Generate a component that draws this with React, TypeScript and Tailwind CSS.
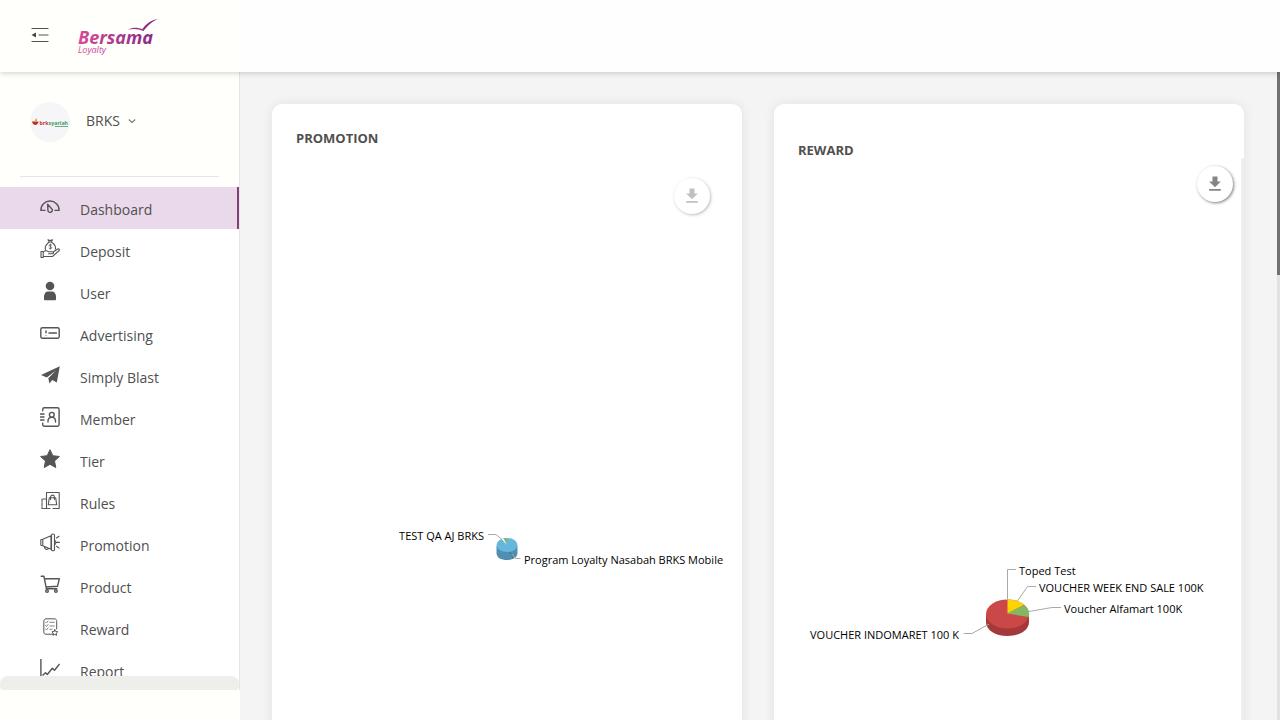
import type { ReactNode } from "react";
import { MdFileDownload } from "react-icons/md";

const line = {
  fill: "none",
  stroke: "#555",
  strokeWidth: 1.4,
  strokeLinecap: "round" as const,
  strokeLinejoin: "round" as const,
};
const thin = { ...line, strokeWidth: 1.1 };

const items: { label: string; icon: ReactNode }[] = [
  {
    label: "Dashboard",
    icon: (
      <g {...line} strokeLinecap="butt">
        <path d="M5.5 13.4H.9C.7 8 5 4 10 4s9.300 4 9.100 9.400h-4.600" />
        <path d="M7.600 7.200 8 14a2.300 2.300 0 0 0 4.400-1c-.2-.8-.8-1.400-1.400-2Z" />
      </g>
    ),
  },
  {
    label: "Deposit",
    icon: (
      <g {...thin}>
        <path d="M1 12.500h2.200v6H1zM3.200 17.500h9.300l6.700-6c.6-1.400-.8-2-2-1.200l-3.700 2.500M3.200 13c2-1.800 3.800-1.600 5.400-.2h3.800c1.500 0 1.500 2 0 2H8.500" />
        <path d="M9.200 3 8 .8l2.200.7L12.500.7l-1.200 2.300ZM9.200 3C6 5.500 4.500 8 5.500 10.800M11.300 3c3 2 4.800 4.600 4 7.200" />
        <path d="M11.700 6c-1-.8-2.700-.3-2.500.8.2 1 2.500.7 2.600 1.900 0 1.100-1.800 1.300-2.800.5M10.400 5v5" strokeWidth=".8" />
      </g>
    ),
  },
  {
    label: "User",
    icon: (
      <g fill="#555">
        <circle cx="10" cy="5" r="4.300" />
        <path d="M4 18.500v-3C4 12.400 6 10.500 8 10.500h4c2 0 4 1.900 4 5v3c0 .5-.3.800-.8.800H4.800c-.5 0-.8-.3-.8-.8Z" />
      </g>
    ),
  },
  {
    label: "Advertising",
    icon: (
      <g {...line}>
        <rect x=".8" y="4.800" width="18.400" height="10.400" rx="1.600" />
        <path d="M9 10h7.500" />
        <path d="M6 7.400v2.800M6 12v.6" strokeWidth="1.500" strokeLinecap="butt" />
      </g>
    ),
  },
  {
    label: "Simply Blast",
    icon: <path fill="#555" d="M19.800 1.200 16.800 17.500l-4.600-2.400-2.700 3.400-1.200-5.300L16 5.600 6.800 12.400 1 9.900Z" />,
  },
  {
    label: "Member",
    icon: (
      <g {...line}>
        <path d="M2.700 3.800V2.500C2.700 1.500 3.400.8 4.400.8h13c1 0 1.700.7 1.700 1.700v15c0 1-.7 1.700-1.700 1.700h-13c-1 0-1.700-.7-1.700-1.700v-1.300" />
        <path d="M.6 7H4M.6 10H4M.6 13H4" />
        <circle cx="11.800" cy="7.800" r="2.400" />
        <path d="M8 15v-1c0-2 1.500-3.600 3.800-3.600s3.700 1.600 3.700 3.600v1" />
      </g>
    ),
  },
  {
    label: "Tier",
    icon: (
      <path
        fill="#555"
        stroke="#555"
        strokeLinejoin="round"
        d="m10 .7 2.800 6 6.600.8-4.900 4.500 1.300 6.600-5.800-3.300-5.800 3.300L5.500 12 .6 7.500l6.600-.8Z"
      />
    ),
  },
  {
    label: "Rules",
    icon: (
      <g {...thin}>
        <path d="M6.500 17V1.500h12.700V17.500H13" />
        <path d="M6 8H2v9.500h8" strokeDasharray="3 1" />
        <path d="M9.300 6.800h6.400l1 7H8.300ZM10.600 8.500V6c0-2.500 3.800-2.500 3.800 0v2.500" />
      </g>
    ),
  },
  {
    label: "Promotion",
    icon: (
      <g {...thin}>
        <path d="M.8 6.700v5.600l2 .4V6.300ZM2.800 6.300 11 2.700v13.600l-8.200-3.600M4.500 13.500c0 2.200 1 3.300 3 2.800l1-.8" />
        <rect x="11.500" y="1" width="3" height="16.800" rx="1.300" />
        <path d="m16.500 5 2.500-1.700M16.600 9.400h2.800M16.500 13.300l2.500 1.800M14.500 7.200c1.800.4 1.800 4 0 4.500" />
      </g>
    ),
  },
  {
    label: "Product",
    icon: (
      <g {...line}>
        <path d="M1.200 1.200h2.700l2.500 12.600h10.400M4.500 3.800h14.800l-1.800 7.500L6 12" />
        <circle cx="7" cy="16" r="1.300" />
        <circle cx="15.900" cy="16" r="1.300" />
      </g>
    ),
  },
  {
    label: "Reward",
    icon: (
      <g {...thin} strokeWidth="1">
        <path d="M13 17.200H6c-1.500 0-2.200-.8-2.200-2.200V4.500C3.800 3 4.500 1.800 6 1.800h8.500c1.500 0 2.200 1.200 2.200 2.700V12" />
        <path d="m5.500 5 1 1 1.500-2M5.500 8.500l1 1 1.500-2M5.500 12l1 1 1.500-2M9.800 5.300h4.500M9.800 9h4.500M9.800 12.300H12" stroke="#657b91" strokeWidth=".9" />
        <path d="m14.800 12.600.9 1.900 2 .3-1.500 1.400.4 2.100-1.800-1-1.900 1 .4-2.100-1.400-1.400 2-.3Z" />
      </g>
    ),
  },
  {
    label: "Report",
    icon: (
      <g {...line} strokeLinecap="butt">
        <path d="M.9 0v18.500h18.600" />
        <path d="m2.500 16.500 3-2.800 1.800 1.800 5-6.300 2.200 2L19.600 5" />
      </g>
    ),
  },
];

function Logo() {
  return (
    <svg width="82" height="40" viewBox="0 0 82 40" role="img" aria-label="Bersama Loyalty">
      <defs>
        <linearGradient id="brand" x1="0" x2="80" y1="0" y2="0" gradientUnits="userSpaceOnUse">
          <stop stopColor="#d64c98" />
          <stop offset="1" stopColor="#832786" />
        </linearGradient>
      </defs>
      <g fill="url(#brand)" fontFamily="'Open Sans', 'Liberation Sans', sans-serif" fontStyle="italic">
        <text x="0" y="28" fontSize="18" fontWeight="700">Bersama</text>
        <text x="0" y="37" fontSize="9">Loyalty</text>
        <path d="M50 13.400c5-2.300 10-2 14.300-.2C68 8 73 3.800 80 3c-6.500 2.500-10 6.500-14.500 12-4.500-2.200-9.500-2.600-15.500-1.600Z" />
      </g>
    </svg>
  );
}

function BankLogo() {
  return (
    <svg width="40" height="40" viewBox="0 0 40 40" role="img" aria-label="brksyariah">
      <circle cx="20" cy="20" r="20" fill="#f6f6f8" />
      <path d="M2 19.500h6.500c-.3 4.500-6 4.500-6.500 0Z" fill="#b83232" />
      <path d="M4.500 19.500c0-2 1.500-2.500 2-3.500.5 1.500.8 2.500 0 3.500Z" fill="#f2a22c" />
      <text x="9.500" y="22.500" fontSize="5.300" fontWeight="700" fontFamily="'Open Sans', sans-serif">
        <tspan fill="#bd3240">brk</tspan>
        <tspan fill="#3a9c5c">syariah</tspan>
      </text>
      <path d="M25 24.500h13" stroke="#70aa82" />
    </svg>
  );
}

function DownloadButton({ faded = false }: { faded?: boolean }) {
  return (
    <button
      type="button"
      aria-label="Download chart"
      className={
        "flex size-9 items-center justify-center rounded-full bg-white text-[#858585] shadow-[1px_1px_3px_rgba(0,0,0,0.5)] " +
        (faded ? "opacity-50" : "")
      }
    >
      <MdFileDownload size={20} />
    </button>
  );
}

const chartText = "fill-black font-['Open_Sans',sans-serif] text-[11px]";

function PromotionChart() {
  return (
    <svg width="422" height="560" viewBox="0 0 422 560" className="max-w-full shrink-0 overflow-visible" role="img" aria-label="Promotion chart">
      <path d="M200.500 332v7c0 4.500 4.500 7 10.500 7s10.500-2.500 10.500-7v-7Z" fill="#508fb0" />
      <ellipse cx="211" cy="331" rx="10.500" ry="7" fill="#67b7dc" />
      <path d="M211 331 207 324.500l3.500-.5Z" fill="#84b761" />
      <path d="M211 331 205.800 325.300l1.700-.8Z" fill="#fff" />
      <path d="m214 338 3 6" stroke="#39708b" />
      <path d="M192 320.500h8l6 5M215.500 340l4 4.500h5" fill="none" stroke="#aaa" />
      <text x="188" y="326" textAnchor="end" className={chartText}>TEST QA AJ BRKS</text>
      <text x="228" y="350" className={chartText}>Program Loyalty Nasabah BRKS Mobile</text>
    </svg>
  );
}

function RewardChart() {
  return (
    <svg width="420" height="560" viewBox="0 0 420 560" className="max-w-full shrink-0 overflow-visible" role="img" aria-label="Reward chart">
      <path d="M188 404v8c0 8 9 14 21.500 14s21.500-6 21.500-14v-8Z" fill="#a3393b" />
      <ellipse cx="209.500" cy="404" rx="21.500" ry="14.500" fill="#cc4748" />
      <path d="M209.500 403.500v-14c7 0 13 2 16.500 5.500Z" fill="#fdd400" />
      <path d="m209.500 403.500 16.500-8.500c4.800 3.500 6 8 4.700 12Z" fill="#84b761" />
      <path
        d="M209.500 389.500v-30h8.500M219 391.500l10.500-15h8.500M231 401.500l23-4h9M191 414l-17 9.500h-8.500"
        fill="none"
        stroke="#aaa"
      />
      <text x="221" y="365" className={chartText}>Toped Test</text>
      <text x="241" y="382" className={chartText}>VOUCHER WEEK END SALE 100K</text>
      <text x="266" y="403" className={chartText}>Voucher Alfamart 100K</text>
      <text x="161" y="429" textAnchor="end" className={chartText}>VOUCHER INDOMARET 100 K</text>
    </svg>
  );
}

const card = "min-w-0 rounded-t-[10px] bg-white shadow-[0_0_12px_rgba(0,0,0,0.08)]";
const heading = "text-[13px] leading-5 font-bold text-[#505050]";

export default function App() {
  return (
    <div className="flex h-screen flex-col overflow-hidden bg-[#f4f4f4] font-['Open_Sans',sans-serif] text-[#505050]">
      <header className="z-10 flex h-18 shrink-0 bg-[#fefefe] shadow-[0_1px_6px_rgba(0,0,0,0.2)]">
        <div className="flex w-60 gap-7 bg-[#fffffb] pt-4 pl-[30px]">
          <button type="button" aria-label="Collapse menu" className="mt-2 size-5">
            <svg viewBox="0 0 20 20" className="size-5">
              <path d="M1.500 4.500h17M8.500 11h10M1.500 17.500h17" stroke="#555" strokeWidth="1.200" />
              <path d="m1.500 11 4.500-2.500v5Z" fill="#444" />
            </svg>
          </button>
          <a href="#home" className="h-10">
            <Logo />
          </a>
        </div>
      </header>

      <div className="flex min-h-0 flex-1">
        <aside className="flex w-60 shrink-0 flex-col bg-[#fffffb]">
          <div className="flex min-h-0 flex-1 flex-col border-r border-[#e6e6e8]">
            <div className="mx-5 mb-2.5 flex h-[105px] shrink-0 items-start gap-4 border-b border-[#e6e6e8] pt-[30px] pl-2.5">
              <BankLogo />
              <button type="button" className="flex h-[38px] items-center gap-2 text-sm">
                BRKS
                <svg width="8" height="8" viewBox="0 0 8 8">
                  <path d="m.8 2.500 3.200 3 3.200-3" fill="none" stroke="#777" strokeWidth="1.100" />
                </svg>
              </button>
            </div>
            <nav className="min-h-0 flex-1 overflow-hidden bg-white">
              <ul>
                {items.map(({ label, icon }, i) => (
                  <li key={label}>
                    <a
                      href={"#" + label.toLowerCase().replace(" ", "-")}
                      aria-current={i === 0 ? "page" : undefined}
                      className={
                        "flex h-[42px] items-start gap-5 pl-10 " +
                        (i === 0 ? "border-r-2 border-[#833f77] bg-[#ead9ea]" : "")
                      }
                    >
                      <svg viewBox="0 0 20 20" className="mt-2.5 size-5 shrink-0">
                        {icon}
                      </svg>
                      <span className="pt-[13px] text-sm leading-5">{label}</span>
                    </a>
                  </li>
                ))}
              </ul>
            </nav>
            <div className="h-3.5 shrink-0 rounded-t-lg rounded-b bg-[#eeeeea]" />
          </div>
          <div className="h-[30px] shrink-0" />
        </aside>

        <main className="grid min-w-0 flex-1 grid-cols-2 gap-8 overflow-hidden pt-8 pr-[33px] pl-8">
          <section className={card + " px-6 pt-6"}>
            <h2 className={heading}>PROMOTION</h2>
            <div className="flex justify-end pt-[30px] pr-2">
              <DownloadButton faded />
            </div>
            <div className="flex justify-center">
              <PromotionChart />
            </div>
          </section>
          <section className={card}>
            <h2 className={heading + " h-[54px] px-6 pt-9"}>REWARD</h2>
            <div className="flex h-full">
              <div className="min-w-0 flex-1">
                <div className="flex justify-end pt-2 pr-2">
                  <DownloadButton />
                </div>
                <div className="flex justify-center pt-2">
                  <RewardChart />
                </div>
              </div>
              <div className="w-[3px] shrink-0 rounded-t-sm bg-[#eee]" />
            </div>
          </section>
        </main>
        <div className="w-[3px] shrink-0 bg-[#e2e2e2]">
          <div className="h-[203px] bg-[#717171]" />
        </div>
      </div>
    </div>
  );
}
